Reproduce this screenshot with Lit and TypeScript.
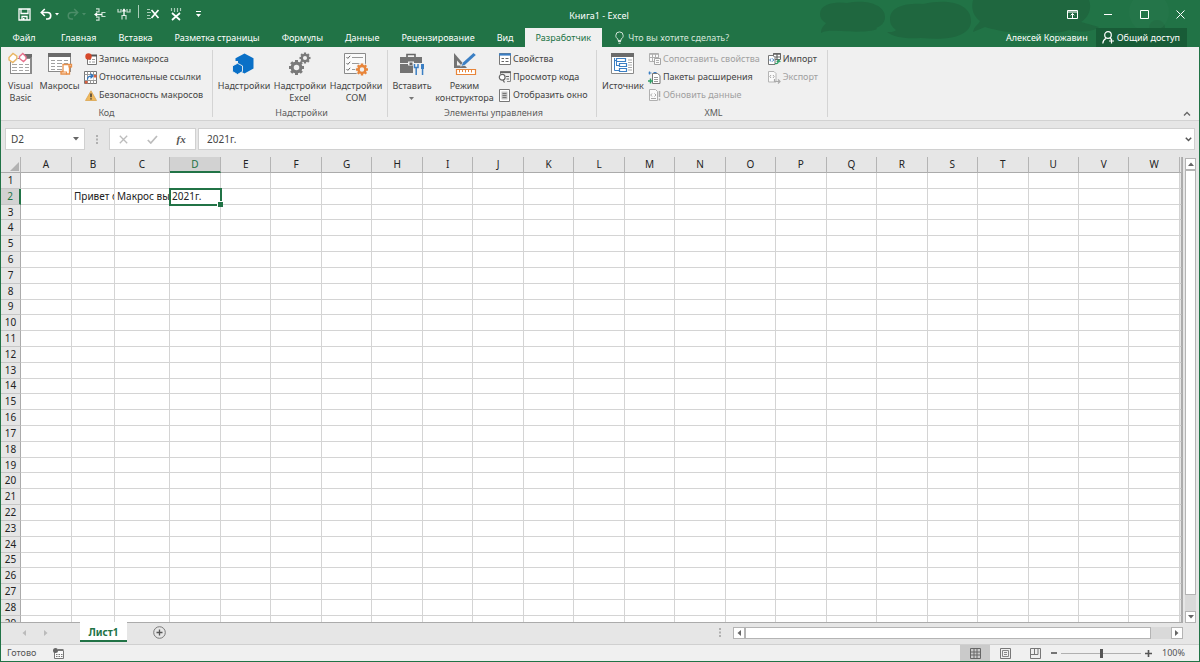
import { LitElement, html, svg, css, nothing } from "lit";
import { customElement, state } from "lit/decorators.js";
import { classMap } from "lit/directives/class-map.js";

const icon = (w: number, h: number, body: unknown) =>
  html`<svg width=${w} height=${h} viewBox="0 0 ${w} ${h}" fill="none" aria-hidden="true">${body}</svg>`;

const gear = (cx: number, cy: number, r: number, color: string) => svg`
  <circle cx=${cx} cy=${cy} r=${r * 0.58} stroke=${color} stroke-width=${r * 0.42}/>
  ${[0, 45, 90, 135, 180, 225, 270, 315].map(
    (a) => svg`<rect x=${cx - r * 0.2} y=${cy - r} width=${r * 0.4} height=${r * 0.35} fill=${color} transform="rotate(${a} ${cx} ${cy})"/>`
  )}`;

const tableGlyph = svg`
  <rect x=".5" y=".5" width="22" height="18" fill="#fff" stroke="#8a8a8a"/>
  <rect width="23" height="4" fill="#6b6b6b"/>
  <path d="M3 7.500h4M9 7.500h5M16 7.500h4M3 10.500h4M9 10.500h5M16 10.500h4M3 13.500h4M9 13.500h5M3 16.500h4M9 16.500h5" stroke="#a0a0a0"/>`;

const icons = {
  save: icon(13, 13, svg`<path d="M1 1h11v11H1zM3 1.500v4h7v-4M4 12V8.500h5V12" stroke="#fff" stroke-width="1.300"/><path d="M5 10h1.500v2H5z" fill="#fff"/>`),
  undo: icon(12, 12, svg`<path d="M1.500 4.500h6a3 3 0 0 1 0 6.500H6M4.800 1L1.300 4.500 4.800 8" stroke="#fff" stroke-width="1.600"/>`),
  redo: icon(12, 12, svg`<path d="M10.500 4.500h-6a3 3 0 0 0 0 6.500H6M7.200 1l3.500 3.500L7.200 8" stroke="#4b8d68" stroke-width="1.500"/>`),
  insRow: icon(12, 13, svg`<path d="M2 .8h3v3H2M2 9.200h3v3H2M11.500 4.500H8v4h3.500" stroke="#c9dfd2" stroke-width="1.200"/><path d="M1 6.500h7" stroke="#fff" stroke-width="1.300"/><path d="M3.200 4.300L0 6.500l3.200 2.200z" fill="#fff"/>`),
  insCol: icon(14, 12, svg`<path d="M1 1v3h3V1M10 1v3h3V1M5 11.500V7.500h4v4" stroke="#c9dfd2" stroke-width="1.200"/><path d="M7 1v7" stroke="#fff" stroke-width="1.300"/><path d="M4.800 3.500L7 .3l2.200 3.200z" fill="#fff"/>`),
  delRow: icon(14, 12, svg`<path d="M1 1.500h3M1 4.500h4M1 7.500h3M1 10.500h4" stroke="#a9cdb8" stroke-width="1.200"/><path d="M5.500 2l7 8M12.500 2l-7 8" stroke="#fff" stroke-width="1.700"/>`),
  delCol: icon(12, 13, svg`<path d="M1.500 0v3M4.500 0v4M7.500 0v4M10.500 0v3" stroke="#a9cdb8" stroke-width="1.200"/><path d="M2 5l8 7M10 5l-8 7" stroke="#fff" stroke-width="1.700"/>`),
  more: icon(5, 7, svg`<path d="M0 .5h5" stroke="#fff"/><path d="M0 3h5L2.500 6z" fill="#fff"/>`),
  down: icon(6, 4, svg`<path d="M0 0h6L3 3.500z" fill="currentColor"/>`),
  up: icon(6, 4, svg`<path d="M0 4h6L3 .5z" fill="currentColor"/>`),
  left: icon(4, 6, svg`<path d="M4 0v6L.5 3z" fill="currentColor"/>`),
  right: icon(4, 6, svg`<path d="M0 0v6l3.500-3z" fill="currentColor"/>`),
  ribbonOpt: icon(11, 9, svg`<path d="M.5.5h10v8H.5zM.5 2h10M5.500 8V3.500M3.700 5.300l1.800-1.800 1.800 1.800" stroke="#fff"/>`),
  min: icon(8, 9, svg`<path d="M0 4.500h8" stroke="#fff"/>`),
  max: icon(9, 9, svg`<path d="M.5.5h8v8h-8z" stroke="#fff"/>`),
  close: icon(9, 9, svg`<path d="M.5.5l8 8M8.500.5l-8 8" stroke="#fff"/>`),
  bulb: icon(9, 13, svg`<path d="M3 9.500V8.200C1.500 7.300.8 6 .8 4.600a3.700 3.700 0 0 1 7.400 0C8.200 6 7.500 7.300 6 8.200v1.300zM3 10.500h3M3.500 12.200h2" stroke="#d3e5da"/>`),
  person: icon(13, 13, svg`<circle cx="6" cy="4" r="3.300" stroke="#fff" stroke-width="1.200"/><path d="M.8 12.500c.2-2.800 1.500-4.300 3.200-5M8 7.200l1 .8M9.500 7.500v5M7 10h5" stroke="#fff" stroke-width="1.200"/>`),
  vb: icon(26, 24, svg`
    <rect x="2.500" y="6.500" width="20" height="15" fill="#fff" stroke="#8a8a8a"/><rect x="14" y="2" width="10" height="4" fill="#6b6b6b"/><path d="M23.500 5v17" stroke="#8a8a8a"/>
    <path d="M4 12.500h5M11 12.500h4M17 12.500h4M4 15.500h5M11 15.500h4M17 15.500h4M4 18.500h5M11 18.500h4M17 18.500h4" stroke="#a6a6a6"/>
    <path d="M0 6l5-5 4.500 4.500v3l-5 3L0 7z" fill="#f0f0f0"/><path d="M1 5.500L5 1.500l3.800 2.700v2.600l-4 3.700L1 7.800z" fill="#fff" stroke="#eab765" stroke-width="1.400"/>
    <path d="M11.500 4.500l3.300-3 3.200 3.300v2.400l-2.500 2.300-4-3z" fill="#fff" stroke="#e8718d" stroke-width="1.400"/>`),
  macros: icon(26, 24, svg`<g transform="translate(1 1)">${tableGlyph}</g>
    <path d="M16 12.500h8.500v2h-2V22H14v-2.500h2z" fill="#fff" stroke="#e8904a" stroke-width="1.300"/><path d="M13.500 20h6v2.500M22 12.500v2.500h3" stroke="#e8904a" stroke-width="1.200"/>`),
  record: icon(12, 12, svg`<path d="M2.500 2.500h9v9h-9z" fill="#fff" stroke="#777"/><path d="M6 2.500h6" stroke="#555" stroke-width="2"/><path d="M4 6.500h2M7 6.500h3M4 9h2M7 9h3" stroke="#999"/><circle cx="3.500" cy="3.500" r="3.200" fill="#d6482a"/>`),
  relative: icon(13, 13, svg`<path d="M.5.5h12v12H.5z" fill="#fff" stroke="#777"/><path d="M.5 3.500h12M.5 9.500h12M3.500.5v12M6.500.5v3M9.500.5v12M6.500 9.500v3" stroke="#999"/><path d="M4 4h5.500v5H4z" fill="#fff"/><path d="M3.500 8.500c0-3 1.500-3.500 5-3.500M6.500 2.800l2.500 2.200-2.500 2.200" stroke="#2f74bd" stroke-width="1.300"/><path d="M1 10h2.500v2.500H1zM10 4h2.500v2.500H10z" fill="#d9603f"/>`),
  warn: icon(12, 11, svg`<path d="M6 .8L11.500 10.500H.5z" fill="#f0b95c" stroke="#dba550" stroke-width=".8"/><path d="M6 3.500v3.700M6 8.200v1.400" stroke="#333" stroke-width="1.400"/>`),
  addins: icon(24, 24, svg`<path d="M12.500 1.500l9 4.800v10.200l-9 5-9-5V6.300z" fill="#0a70c7"/><path d="M0 9h6v6H0z" fill="#f0f0f0"/><path d="M5.500 11.300l5 2.600v5.600l-5 3-5-3v-5.600z" fill="#0a70c7" stroke="#f0f0f0" stroke-width=".9"/>`),
  gears: icon(24, 24, svg`${gear(8.5, 15.5, 7.5, "#7a7a7a")}${gear(17, 6, 5.5, "#7a7a7a")}`),
  com: icon(26, 24, svg`<path d="M1.500 1.500h21v20h-21z" fill="#fafafa" stroke="#8a8a8a"/>
    <path d="M3.500 5l1.300 1.400 2.400-2.600M3.500 11l1.300 1.400 2.400-2.600M3.500 17l1.300 1.400 2.400-2.600" stroke="#666"/><path d="M9 5.500h11M9 11.500h8M9 17.500h4" stroke="#999"/>
    <circle cx="19" cy="17.500" r="6.800" fill="#f0f0f0"/>${gear(19, 17.5, 6, "#e8853a")}`),
  toolbox: icon(26, 24, svg`<path d="M8 5V2.500h8V5" stroke="#666" stroke-width="1.600"/><path d="M1 5h22v6H1zM1 12h22v9H1z" fill="#737373"/><path d="M1 11.500h22" stroke="#f0f0f0"/><path d="M9 9.500h6v4H9z" fill="#f0f0f0"/><path d="M10.500 10.500h3v2.500h-3z" fill="#666"/>
    <path d="M14 11h12v13H14z" fill="#f0f0f0"/><path d="M15.500 12v3.500h3.500V12M17.200 15.500V23" stroke="#3b7fc4" stroke-width="1.500"/><path d="M22 12h3v5h-3zM22.800 17h1.500v6h-1.500z" fill="#3b7fc4"/>`),
  design: icon(26, 24, svg`<path d="M2 1v15h13z" fill="#737373"/><path d="M5 8.500v5h4.500z" fill="#f0f0f0"/><path d="M8 14.500l3-4.500L22 0l3 2.500-11 11z" fill="#f0f0f0"/><path d="M9.500 14l1.500-3.500L21.500 1l2.300 2L13 12.700z" fill="#3b7fc4"/>
    <path d="M4.500 17.500h19v5h-19z" fill="#fff" stroke="#e8853a" stroke-width="1.200"/><path d="M7.500 18v2.500M10.500 18v2M13.500 18v2.500M16.500 18v2M19.500 18v2.500" stroke="#e8853a"/>`),
  props: icon(12, 12, svg`<path d="M.5.5h11v11H.5z" fill="#fff" stroke="#777"/><path d="M0 1.500h12" stroke="#3b7fc4" stroke-width="2.200"/><path d="M2.500 5.500H5M6.500 5.500h3M2.500 8.500H5M6.500 8.500h3" stroke="#666"/>`),
  view: icon(13, 12, svg`<path d="M2.500.5h10v10H9M2.500.5V3" stroke="#888"/><path d="M2 1.300h11" stroke="#666" stroke-width="1.600"/><circle cx="4.200" cy="6.200" r="2.900" fill="#fff" stroke="#666" stroke-width="1.200"/><path d="M5 9.200l1.500 2.300M8 5.500h3M8.500 8h2.500" stroke="#666" stroke-width="1.200"/>`),
  dialog: icon(11, 13, svg`<path d="M.5.5h10v12H.5z" fill="#fff" stroke="#777"/><path d="M2.500 2.500h6v8h-6z" fill="#c4c4c4"/><path d="M3.500 4.500h4M3.500 6.500h4M3.500 8.500h4" stroke="#777"/>`),
  source: icon(24, 24, svg`<path d="M.5 1.500h22v20H.5z" fill="#fff" stroke="#8a8a8a"/><path d="M0 1h23v4H0z" fill="#6b6b6b"/><path d="M3.500 6v12.500H8M3.500 8.500H7M5.500 13.500H9M5.500 9v5" stroke="#3b7fc4"/>
    <path d="M5.500 6.500h9v3h-9zM8.500 11.500h7v3h-7zM8.500 16.500h7v3h-7z" fill="#fff" stroke="#3b7fc4" stroke-width="1.200"/><path d="M17 8h4M17 13h4M17 18h4M17 10.500h4M17 15.500h4" stroke="#aaa"/>`),
  mapProps: icon(12, 12, svg`<path d="M.5.5h9v8h-9z" fill="#fafafa" stroke="#b0b0b0"/><path d="M0 1.300h10M3.500 1v7M6.500 1v3M1 4.500h9" stroke="#b0b0b0"/><path d="M5.500 5.500h6v6h-6z" fill="#fafafa" stroke="#a5a5a5"/><path d="M7 7.500h3M7 9.500h3" stroke="#b0b0b0"/>`),
  packs: icon(13, 13, svg`<path d="M4.500 2.500h5l2.500 2v8H4.500z" fill="#fff" stroke="#777"/><path d="M6 6.500h4M6 8.500h4M6 10.500h4" stroke="#999"/><path d="M.5 2h3M5.500 1.500h3M1.500.5v3" stroke="#3b7fc4" stroke-width="1.200"/><path d="M2.500 7.500v5M0 10h5" stroke="#2f9e66" stroke-width="1.500"/>`),
  refresh: icon(12, 13, svg`<path d="M.5.5h6l2 2v9h-8z" fill="#fafafa" stroke="#b0b0b0"/><path d="M3 4.500L1.700 6 3 7.500M5.500 4.500L7 6 5.500 7.500M2 9.500h5" stroke="#a8a8a8"/><path d="M10.500 2v6M10.500 9.500v2" stroke="#a8a8a8" stroke-width="1.500"/>`),
  imp: icon(13, 13, svg`<path d="M5.500.5h7v6h-7z" fill="#fff" stroke="#666"/><path d="M5 1.200h8M9 1v5M5.500 4h7" stroke="#666" stroke-width="1.200"/><path d="M.5 2.500H5l2 2v7H.5z" fill="#fff" stroke="#777"/><path d="M3 5.500L1.800 7 3 8.500M4.500 5.500L5.700 7 4.500 8.500" stroke="#3b7fc4"/><path d="M7 10.500c2.500.5 3.500-.5 3.500-3M8.800 9l1.700-2 1.800 2" stroke="#2f9e66" stroke-width="1.200"/>`),
  exp: icon(13, 13, svg`<path d="M.5.500h5.500l2 2v8.500H.5z" fill="#fafafa" stroke="#b5b5b5"/><path d="M3 4L1.800 5.500 3 7M5 4l1.200 1.500L5 7" stroke="#aaa"/><path d="M6.500 8v2.500H12M10 8.500l2 2-2 2" stroke="#aaa" stroke-width="1.200"/>`),
  collapse: icon(8, 5, svg`<path d="M1 4.500l3-3 3 3" stroke="#666" stroke-width="1.300"/>`),
  expand: icon(7, 5, svg`<path d="M.8.8l2.700 2.700L6.200.8" stroke="#555" stroke-width="1.500"/>`),
  cancel: icon(9, 9, svg`<path d="M.8.8l7.400 7.400M8.200.8L.8 8.200" stroke="#bcbcbc" stroke-width="1.300"/>`),
  accept: icon(11, 9, svg`<path d="M.8 5l3 3L10 1" stroke="#bcbcbc" stroke-width="1.700"/>`),
  plus: icon(13, 13, svg`<circle cx="6.500" cy="6.500" r="5.800" stroke="#777"/><path d="M6.500 3.500v6M3.500 6.500h6" stroke="#555" stroke-width="1.300"/>`),
  macroStatus: icon(11, 11, svg`<path d="M1.500 2.500h9v8h-9z" fill="#fafafa" stroke="#777"/><path d="M5 1.500h5.500M3 6.500h1.500M5.500 6.500H7M8 6.500h1.500M3 8.500h1.500M5.500 8.500H7M8 8.500h1.500" stroke="#777"/><circle cx="2.500" cy="2.500" r="2.500" fill="#666"/>`),
  normal: icon(11, 11, svg`<path d="M.5.5h10v10H.5zM.5 4h10M.5 7h10M4 .5v10M7 .5v10" stroke="#666"/>`),
  layout: icon(11, 11, svg`<path d="M.5.5h10v10H.5z" stroke="#777"/><path d="M2.500 2.500h6v6h-6z" stroke="#888"/><path d="M4 4.500h3M4 6.500h3" stroke="#888"/>`),
  breaks: icon(11, 11, svg`<path d="M.5.500h10v10H.5zM.5 6.500h7.500V.5M4.500.500V6" stroke="#777"/>`),
};

type IconName = keyof typeof icons;
interface Command { label: string[]; icon: IconName; menu?: boolean; off?: boolean }
interface Group { title: string; name: string; big: Command[]; small: Command[][] }

const c = (i: IconName, ...label: string[]): Command => ({ icon: i, label });
const groups: Group[] = [
  { title: "Код", name: "code", big: [c("vb", "Visual", "Basic"), c("macros", "Макросы")],
    small: [[c("record", "Запись макроса"), c("relative", "Относительные ссылки"), c("warn", "Безопасность макросов")]] },
  { title: "Надстройки", name: "addins", small: [],
    big: [c("addins", "Надстройки"), c("gears", "Надстройки", "Excel"), c("com", "Надстройки", "COM")] },
  { title: "Элементы управления", name: "controls",
    big: [{ ...c("toolbox", "Вставить"), menu: true }, c("design", "Режим", "конструктора")],
    small: [[c("props", "Свойства"), c("view", "Просмотр кода"), c("dialog", "Отобразить окно")]] },
  { title: "XML", name: "xml", big: [c("source", "Источник")],
    small: [
      [{ ...c("mapProps", "Сопоставить свойства"), off: true }, c("packs", "Пакеты расширения"), { ...c("refresh", "Обновить данные"), off: true }],
      [c("imp", "Импорт"), { ...c("exp", "Экспорт"), off: true }],
    ] },
];

const tabs = ["Главная", "Вставка", "Разметка страницы", "Формулы", "Данные", "Рецензирование", "Вид", "Разработчик"];
const columns = "ABCDEFGHIJKLMNOPQRSTUVW".split("");
const rows = Array.from({ length: 29 }, (_, i) => i + 1);
const cells: Record<string, string> = { B2: "Привет с", C2: "Макрос вы", D2: "2021г." };

const reset = css`
  * { box-sizing: border-box; }
  button, input { font: inherit; color: inherit; background: none; border: 0; padding: 0; margin: 0; border-radius: 0; outline: 0; }
  button { display: flex; align-items: center; justify-content: center; white-space: nowrap; flex: none; }
  svg { display: block; flex: none; }
`;

@customElement("excel-ribbon")
class ExcelRibbon extends LitElement {
  static styles = [reset, css`
    :host { display: flex; background: #f0f0f0; border-bottom: 1px solid #d2d2d2; color: #444; padding: 3px 8px 3px 0; height: 74px; flex: none; }
    .group { display: flex; flex-direction: column; justify-content: space-between; border-right: 1px solid #d4d4d4; padding-left: 3px; flex: none; }
    .code { width: 212px; padding-left: 0; }
    .addins { width: 175px; }
    .controls { width: 209px; }
    .xml { width: 231px; }
    .body { display: flex; }
    .big { flex-direction: column; justify-content: flex-start; align-items: center; line-height: 12px; padding-top: 2px; height: 56px; gap: 4px; }
    .code .big { width: 39px; }
    .addins .big { width: 56px; }
    .controls .big { width: 42px; }
    .controls .big + .big { width: 63px; }
    .xml .big { width: 46px; }
    .text { display: flex; flex-direction: column; align-items: center; }
    .menu { display: flex; justify-content: center; align-items: center; height: 12px; color: #777; }
    .list { display: flex; flex-direction: column; margin-left: 5px; }
    .controls .list, .xml .list { margin-left: 2px; }
    .xml .list + .list { margin-left: 8px; }
    .small { height: 18px; justify-content: flex-start; gap: 2px; }
    .small:disabled { color: #a0a0a0; }
    .slot { width: 13px; flex: none; display: flex; justify-content: center; }
    .title { text-align: center; color: #5c5c5c; line-height: 8px; }
    .collapse { margin-left: auto; align-self: flex-end; height: 8px; }
  `];
  private big(cmd: Command) {
    return html`<button class="big">${icons[cmd.icon]}
      <span class="text">${cmd.label.map((l) => html`<span>${l}</span>`)}
      ${cmd.menu ? html`<span class="menu">${icon(5, 3, svg`<path d="M0 0h5L2.500 3z" fill="currentColor"/>`)}</span>` : nothing}</span></button>`;
  }
  render() {
    return html`${groups.map((g) => html`
      <section class="group ${g.name}">
        <div class="body">
          ${g.big.map((b) => this.big(b))}
          ${g.small.map((col) => html`<div class="list">${col.map((s) => html`
            <button class="small" ?disabled=${s.off ?? false}><span class="slot">${icons[s.icon]}</span>${s.label[0]}</button>`)}</div>`)}
        </div>
        <div class="title">${g.title}</div>
      </section>`)}
      <button class="collapse" aria-label="Свернуть ленту">${icons.collapse}</button>`;
  }
}

@customElement("excel-sheet")
class ExcelSheet extends LitElement {
  @state() private active = "D2";
  static styles = [reset, css`
    :host { display: flex; flex: 1; min-height: 0; gap: 2px; padding-right: 3px; background: #e6e6e6; font-size: 10px; }
    .view { flex: 1; overflow: hidden; border-right: 1px solid #ababab; border-bottom: 1px solid #ababab; }
    table { width: 100%; height: calc(100% + 10px); table-layout: fixed; border-collapse: separate; border-spacing: 0; background: #fff; color: #222; line-height: 13px; }
    .rowcol { width: 20px; }
    .a, .d { width: 51px; }
    .b { width: 43px; }
    .c { width: 55px; }
    .rest { width: 2px; }
    th, td { padding: 0; white-space: nowrap; overflow: hidden; border-right: 1px solid #d4d4d4; border-bottom: 1px solid #d4d4d4; }
    th { font-weight: 400; background: #e6e6e6; text-align: center; }
    thead th { height: 16px; border-bottom-color: #ababab; border-right-color: #b4b4b4; }
    tbody th { border-right-color: #ababab; border-bottom-color: #c6c6c6; }
    thead .on { background: #d2d2d2; color: #217346; border-bottom: 2px solid #217346; }
    tbody .on { background: #d2d2d2; color: #217346; border-right: 2px solid #217346; }
    td { padding-left: 2px; }
    .active { position: relative; overflow: visible; }
    .active::before { content: ""; position: absolute; inset: -1px -2px -2px -1px; border: 2px solid #217346; }
    .active::after { content: ""; position: absolute; right: -3px; bottom: -3px; width: 5px; height: 5px; background: #217346; border: solid #fff; border-width: 1px 0 0 1px; }
    .corner { vertical-align: bottom; }
    .corner svg { margin-left: auto; margin-right: 1px; margin-bottom: 1px; }
    .bar { width: 11px; display: flex; flex-direction: column; background: #d9d9d9; color: #666; margin-top: 1px; }
    .bar button { height: 12px; background: #fff; border: 1px solid #b4b4b4; }
    .thumb { flex: 1; background: #fff; border: 1px solid #b4b4b4; }
    .track { height: 16px; }
  `];
  render() {
    return html`<div class="view"><table>
      <colgroup><col class="rowcol"><col class="a"><col class="b"><col class="c"><col class="d">${columns.slice(4).map(() => html`<col>`)}<col class="rest"></colgroup>
      <thead><tr><th class="corner">${icon(9, 9, svg`<path d="M9 0v9H0z" fill="#b2b2b2"/>`)}</th>
        ${columns.map((k) => html`<th class=${classMap({ on: this.active[0] === k })}>${k}</th>`)}<th></th></tr></thead>
      <tbody>${rows.map((r) => html`<tr><th class=${classMap({ on: this.active.slice(1) === String(r) })}>${r}</th>
        ${columns.map((k) => html`<td class=${classMap({ active: this.active === k + r })} @click=${() => (this.active = k + r)}>${cells[k + r] ?? nothing}</td>`)}<th></th></tr>`)}
      </tbody></table></div>
      <div class="bar"><button aria-label="Вверх">${icons.up}</button><div class="thumb"></div><div class="track"></div><button aria-label="Вниз">${icons.down}</button></div>`;
  }
}

@customElement("app-root")
class AppRoot extends LitElement {
  static styles = [reset, css`
    :host { display: flex; flex-direction: column; height: 100vh; font: 9px/14px "Noto Sans", "Open Sans", sans-serif; color: #444; background: #e6e6e6; border: solid #217346; border-width: 0 1px 1px; overflow: hidden; box-sizing: border-box; }
    header { position: relative; background: #217346; color: #fff; flex: none; height: 47px; display: flex; flex-direction: column; }
    .art { position: absolute; right: 0; top: 0; }
    .titlebar { position: relative; display: grid; grid-template-columns: 1fr auto 1fr; align-items: center; height: 28px; padding-right: 2px; }
    .quick { display: flex; align-items: center; padding-left: 17px; height: 26px; }
    .quick button { height: 18px; }
    .caret { width: 9px; margin-right: 6px; color: #fff; }
    .dim { color: #4b8d68; margin-right: 0; }
    .undo { margin-left: 9px; }
    .ins { width: 24px; }
    .rule { width: 1px; height: 13px; background: #a9cdb8; margin: 0 7px 6px 2px; }
    .last { margin-left: 10px; }
    .custom { width: 32px; }
    .name { padding-top: 3px; }
    .window { display: flex; justify-content: flex-end; margin-right: -1px; }
    .window button { width: 36px; height: 26px; }
    .tabs { position: relative; display: flex; flex: 1; }
    .tabs button { padding: 0 11px; }
    .tabs .file { width: 49px; padding: 0 3px 0 0; }
    .tabs .current { background: #f0f0f0; color: #217346; }
    .tell { display: flex; align-items: center; gap: 4px; padding-left: 13px; }
    .tell input { width: 130px; }
    .tell input::placeholder { color: #d3e5da; opacity: 1; }
    .tabs .user { margin-left: auto; padding-right: 8px; }
    .tabs .share { background: #185c37; gap: 2px; padding: 0 7px 0 6px; margin-right: 12px; }
    .formula { display: flex; flex: none; padding: 7px 4px; height: 36px; font-size: 10px; }
    .box { display: flex; align-items: center; background: #fff; border: 1px solid #d0d0d0; }
    .namebox { width: 80px; }
    .namebox input { width: 60px; padding-left: 5px; flex: 1; }
    .namebox button { width: 16px; color: #666; }
    .dots { width: 24px; display: flex; justify-content: center; align-items: center; }
    .tools { width: 87px; justify-content: space-around; margin-right: 2px; }
    .fx { font: italic bold 11px/14px "Liberation Serif", serif; color: #555; }
    .edit { flex: 1; }
    .edit input { flex: 1; padding-left: 8px; }
    .edit button { width: 12px; }
    .sheets { display: flex; flex: none; height: 21px; align-items: flex-start; }
    .nav { display: flex; width: 79px; height: 20px; padding-left: 12px; color: #bbb; }
    .nav button { width: 22px; }
    .sheet { width: 47px; height: 20px; background: #fff; color: #217346; font-size: 10px; font-weight: 700; border-bottom: 2px solid #217346; margin-top: -1px; padding-top: 2px; position: relative; }
    .add { margin: 3px 0 0 26px; }
    .grip { margin: 5px 10px 0 auto; width: 4px; }
    .hscroll { margin: 4px 16px 0 0; display: flex; width: 450px; height: 12px; background: #d9d9d9; color: #666; }
    .hscroll button { width: 12px; background: #fff; border: 1px solid #b4b4b4; }
    .hthumb { flex: 1; background: #fff; border: 1px solid #b4b4b4; }
    .htrack { width: 20px; }
    footer { display: flex; flex: none; align-items: center; height: 17px; background: #f0f0f0; border-top: 1px solid #d0d0d0; padding-left: 6px; color: #555; }
    .rec { margin-left: 17px; }
    .views { display: flex; margin-left: auto; align-self: stretch; }
    .views button { width: 30px; }
    .views .now { background: #cacaca; }
    .zoom { display: flex; align-items: center; gap: 3px; }
    .zoom button { width: 8px; height: 14px; }
    .zoom input { appearance: none; width: 80px; height: 12px; background: linear-gradient(#b0b0b0, #b0b0b0) center / 100% 1px no-repeat; }
    .zoom input::-webkit-slider-thumb { appearance: none; width: 3px; height: 9px; background: #555; }
    .percent { width: 47px; padding-left: 10px; }
  `];
  render() {
    const caret = icon(4, 3, svg`<path d="M0 0h4L2 2.500z" fill="currentColor"/>`);
    const grip = icon(2, 9, svg`<path d="M0 0h2v2H0zM0 3.500h2v2H0zM0 7h2v2H0z" fill="#b0b0b0"/>`);
    return html`
      <header>
        <svg class="art" width="384" height="47" viewBox="0 0 384 47" aria-hidden="true">
          <g fill="#1f673f"><path d="M5 14C5 4 20 1 32 3c20-4 38 2 38 14 0 6-4 9-9 11 5 2-12 5-34 3-8 0-16-1-21 2 0-6 4-8 5-10-4-2-6-5-6-9z"/>
          <path d="M75 19C75 7 90 3 108 4c28-6 48 1 48 17 0 15-22 20-50 17-18 1-27-1-34-6 5 0 7 0 9-2-4-3-6-6-6-11z"/>
          <path d="M158 0h116c3 8 0 17-8 22l18 5c-8 6-22 5-30 3-20 7-62 4-84-3l-12 5c1-6 6-8 7-11-7-5-9-13-7-21z"/>
          <circle cx="342" cy="28" r="8"/></g>
          <circle cx="334" cy="12" r="20" fill="#28784c" opacity=".5"/>
        </svg>
        <div class="titlebar">
          <div class="quick">
            <button aria-label="Сохранить">${icons.save}</button>
            <button class="undo" aria-label="Отменить">${icons.undo}</button><button class="caret" aria-label="Список отмены">${caret}</button>
            <button aria-label="Вернуть">${icons.redo}</button><button class="caret dim" aria-label="Список возврата">${caret}</button>
            <button class="ins" aria-label="Вставить строки">${icons.insRow}</button>
            <button class="ins" aria-label="Вставить столбцы">${icons.insCol}</button>
            <span class="rule"></span>
            <button aria-label="Удалить строки">${icons.delRow}</button>
            <button class="last" aria-label="Удалить столбцы">${icons.delCol}</button>
            <button class="custom" aria-label="Настройка панели">${icons.more}</button>
          </div>
          <div class="name">Книга1 - Excel</div>
          <div class="window">
            <button aria-label="Параметры ленты">${icons.ribbonOpt}</button><button aria-label="Свернуть">${icons.min}</button>
            <button aria-label="Развернуть">${icons.max}</button><button aria-label="Закрыть">${icons.close}</button>
          </div>
        </div>
        <nav class="tabs">
          <button class="file">Файл</button>
          ${tabs.map((t) => html`<button class=${classMap({ current: t === "Разработчик" })}>${t}</button>`)}
          <label class="tell">${icons.bulb}<input aria-label="Поиск команды" placeholder="Что вы хотите сделать?"></label>
          <button class="user">Алексей Коржавин</button>
          <button class="share">${icons.person}Общий доступ</button>
        </nav>
      </header>
      <excel-ribbon></excel-ribbon>
      <div class="formula">
        <div class="box namebox"><input aria-label="Имя" .value=${"D2"}><button aria-label="Список имён">${icons.down}</button></div>
        <span class="dots">${grip}</span>
        <div class="box tools"><button aria-label="Отмена">${icons.cancel}</button><button aria-label="Ввод">${icons.accept}</button><button class="fx">fx</button></div>
        <div class="box edit"><input aria-label="Строка формул" .value=${"2021г."}><button aria-label="Развернуть строку">${icons.expand}</button></div>
      </div>
      <excel-sheet></excel-sheet>
      <div class="sheets">
        <div class="nav"><button aria-label="Назад">${icons.left}</button><button aria-label="Вперёд">${icons.right}</button></div>
        <button class="sheet">Лист1</button>
        <button class="add" aria-label="Новый лист">${icons.plus}</button>
        <span class="grip">${grip}</span>
        <div class="hscroll"><button aria-label="Влево">${icons.left}</button><div class="hthumb"></div><div class="htrack"></div><button aria-label="Вправо">${icons.right}</button></div>
      </div>
      <footer>
        <span>Готово</span><button class="rec" aria-label="Записать макрос">${icons.macroStatus}</button>
        <div class="views"><button class="now" aria-label="Обычный">${icons.normal}</button><button aria-label="Разметка страницы">${icons.layout}</button><button aria-label="Страничный">${icons.breaks}</button></div>
        <div class="zoom"><button aria-label="Уменьшить">${icon(6, 6, svg`<path d="M0 3h6" stroke="#555" stroke-width="1.600"/>`)}</button>
          <input type="range" aria-label="Масштаб" min="0" max="200" .value=${"100"}>
          <button aria-label="Увеличить">${icon(7, 7, svg`<path d="M0 3.500h7M3.500 0v7" stroke="#555" stroke-width="1.600"/>`)}</button></div>
        <span class="percent">100%</span>
      </footer>`;
  }
}
